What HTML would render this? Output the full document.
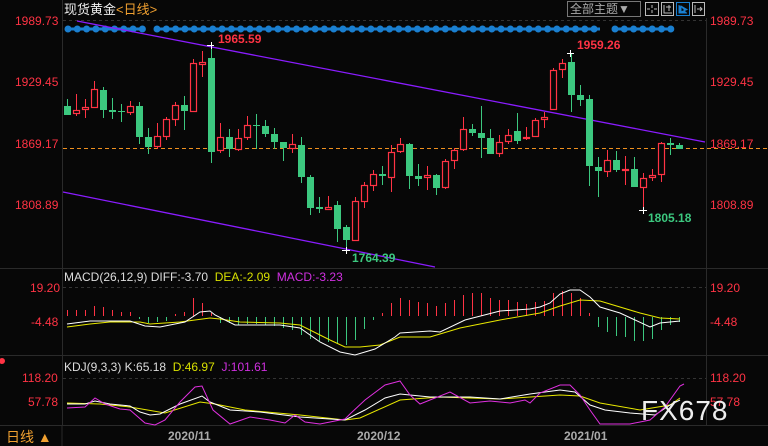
<!DOCTYPE html><html><head><meta charset="utf-8"><style>
body{margin:0;width:768px;height:446px;background:#070707;overflow:hidden;font-family:"Liberation Sans","Noto Sans CJK SC",sans-serif;position:relative}
.t{position:absolute;font-size:12px;white-space:nowrap;line-height:14px}
.r{color:#ff3344}
</style></head><body>
<svg width="768" height="446" style="position:absolute;left:0;top:0">
<g stroke="#2a2a2a" stroke-width="1" fill="none">
<line x1="62.5" y1="0" x2="62.5" y2="425"/>
<line x1="706.5" y1="18" x2="706.5" y2="425"/>
<line x1="0" y1="268.5" x2="768" y2="268.5"/>
<line x1="0" y1="355.5" x2="768" y2="355.5"/>
<line x1="0" y1="425.5" x2="768" y2="425.5"/>
<line x1="62" y1="446" x2="62" y2="426"/>
</g>
<g stroke="#333" stroke-dasharray="3 3"><line x1="63" y1="20.5" x2="706" y2="20.5"/><line x1="63" y1="287.5" x2="706" y2="287.5"/><line x1="63" y1="378.5" x2="706" y2="378.5"/></g>
<line x1="63" y1="148.5" x2="768" y2="148.5" stroke="#f0901e" stroke-dasharray="4 3"/>
<g stroke="#1a7fd0" stroke-width="7" stroke-linecap="round" stroke-dasharray="0 9.3"><line x1="68" y1="29" x2="146" y2="29"/><line x1="157" y1="29" x2="602" y2="29"/><line x1="615" y1="29" x2="676" y2="29"/></g>
<g stroke="#1a7fd0" stroke-width="3"><line x1="68" y1="29" x2="144" y2="29"/><line x1="157" y1="29" x2="600" y2="29"/><line x1="615" y1="29" x2="674" y2="29"/></g>
<g stroke="#8a1cff" stroke-width="1.3"><line x1="77" y1="21" x2="705" y2="142"/><line x1="63" y1="192" x2="435" y2="267"/></g>
<!-- candles -->
<g id="c"></g>
<g stroke="#3cc87f" stroke-width="1">
<path d="M67.5 99V115M103.5 87V118M112.5 98V119M121.5 104V122M139.5 102V144M148.5 128V154M184.5 96V130M211.5 45V163M229.5 129V157M256.5 114V149M265.5 120V137M274.5 128V149M283.5 142V161M301.5 137V183M310.5 175V215M319.5 197V213M337.5 201V242M346.5 225V250M382.5 166V185M409.5 143V189M418.5 164V186M436.5 174V195M472.5 124V136M481.5 106V158M490.5 129V154M517.5 113V144M571.5 53V112M580.5 85V106M589.5 95V186M598.5 157V197M616.5 151V172M634.5 157V187M670.5 138V155M679.5 143V149"/>
</g>
<g fill="#3cc87f">
<rect x="64" y="106" width="7" height="9"/><rect x="100" y="90" width="7" height="20"/><rect x="109" y="110" width="7" height="2"/><rect x="118" y="111" width="7" height="1"/><rect x="136" y="106" width="7" height="31"/><rect x="145" y="137" width="7" height="10"/><rect x="181" y="105" width="7" height="6"/><rect x="208" y="58" width="7" height="94"/><rect x="226" y="137" width="7" height="12"/><rect x="253" y="125" width="7" height="1"/><rect x="262" y="126" width="7" height="8"/><rect x="271" y="134" width="7" height="8"/><rect x="280" y="142" width="7" height="6"/><rect x="298" y="145" width="7" height="32"/><rect x="307" y="177" width="7" height="31"/><rect x="316" y="207" width="7" height="2"/><rect x="334" y="205" width="7" height="24"/><rect x="343" y="227" width="7" height="13"/><rect x="379" y="174" width="7" height="2"/><rect x="406" y="144" width="7" height="32"/><rect x="415" y="176" width="7" height="3"/><rect x="433" y="175" width="7" height="13"/><rect x="469" y="129" width="7" height="4"/><rect x="478" y="133" width="7" height="5"/><rect x="487" y="138" width="7" height="16"/><rect x="514" y="131" width="7" height="10"/><rect x="568" y="62" width="7" height="33"/><rect x="577" y="95" width="7" height="5"/><rect x="586" y="99" width="7" height="67"/><rect x="595" y="167" width="7" height="4"/><rect x="613" y="160" width="7" height="10"/><rect x="631" y="169" width="7" height="18"/><rect x="667" y="143" width="7" height="2"/><rect x="676" y="145" width="7" height="4"/>
</g>
<g stroke="#ff3344" stroke-width="1"><path d="M76.5 94V116M85.5 99V118M94.5 81V107M130.5 101V115M157.5 123V149M166.5 117V140M175.5 102V126M193.5 59V111M202.5 51V77M220.5 123V153M238.5 129V151M247.5 116V140M292.5 134V153M328.5 196V209M355.5 197V240M364.5 182V208M373.5 170V191M391.5 145V192M400.5 138V153M427.5 166V190M445.5 159V189M454.5 148V169M463.5 117V151M499.5 135V157M508.5 129V144M526.5 127V140M535.5 118V137M544.5 112V128M553.5 68V109M562.5 59V78M607.5 150V177M625.5 156V185M643.5 173V210M652.5 169V181M661.5 142V182"/></g>
<g fill="#070707" stroke="#ff3344" stroke-width="1.2">
<rect x="73.5" y="110.5" width="6" height="3"/><rect x="82.5" y="107.5" width="6" height="2"/><rect x="91.5" y="89.5" width="6" height="18"/><rect x="127.5" y="106.5" width="6" height="6"/><rect x="154.5" y="136.5" width="6" height="10"/><rect x="163.5" y="119.5" width="6" height="17"/><rect x="172.5" y="105.5" width="6" height="14"/><rect x="190.5" y="63.5" width="6" height="48"/><rect x="199.5" y="62.5" width="6" height="2"/><rect x="217.5" y="137.5" width="6" height="13"/><rect x="235.5" y="138.5" width="6" height="11"/><rect x="244.5" y="125.5" width="6" height="12"/><rect x="289.5" y="144.5" width="6" height="4"/><rect x="325.5" y="207.5" width="6" height="2"/><rect x="352.5" y="201.5" width="6" height="39"/><rect x="361.5" y="185.5" width="6" height="16"/><rect x="370.5" y="174.5" width="6" height="11"/><rect x="388.5" y="152.5" width="6" height="25"/><rect x="397.5" y="144.5" width="6" height="7"/><rect x="424.5" y="175.5" width="6" height="2"/><rect x="442.5" y="161.5" width="6" height="26"/><rect x="451.5" y="150.5" width="6" height="10"/><rect x="460.5" y="129.5" width="6" height="20"/><rect x="496.5" y="142.5" width="6" height="11"/><rect x="505.5" y="135.5" width="6" height="6"/><rect x="523.5" y="137.5" width="6" height="1"/><rect x="532.5" y="120.5" width="6" height="16"/><rect x="541.5" y="117.5" width="6" height="2"/><rect x="550.5" y="70.5" width="6" height="39"/><rect x="559.5" y="63.5" width="6" height="6"/><rect x="604.5" y="160.5" width="6" height="11"/><rect x="622.5" y="169.5" width="6" height="1"/><rect x="640.5" y="178.5" width="6" height="9"/><rect x="649.5" y="175.5" width="6" height="2"/><rect x="658.5" y="143.5" width="6" height="31"/>
</g>
<g stroke="#fff" stroke-width="1"><path d="M207 45.5H214M211.5 42V49M567 53.5H574M570.5 50V57M342 250.5H350M346.5 247V254M639 210.5H647M643.5 207V214"/></g>
<!-- MACD histogram -->
<path stroke="#ff3344" stroke-width="1" d="M67.5 316V310M76.5 316V310M85.5 316V310M94.5 316V306M103.5 316V307M112.5 316V310M121.5 316V312M130.5 316V312M175.5 316V314M184.5 316V312M193.5 316V298M202.5 316V303M211.5 316V313M382.5 316V313M391.5 316V303M400.5 316V298M409.5 316V300M418.5 316V302M427.5 316V303M436.5 316V306M445.5 316V303M454.5 316V300M463.5 316V295M472.5 316V293M481.5 316V293M490.5 316V298M499.5 316V300M508.5 316V300M517.5 316V302M526.5 316V304M535.5 316V302M544.5 316V301M553.5 316V293M562.5 316V291M571.5 316V293M580.5 316V298M589.5 316V313"/>
<path stroke="#3cc87f" stroke-width="1" d="M139.5 317V319M148.5 317V323M157.5 317V322M166.5 317V321M220.5 317V323M229.5 317V323M238.5 317V325M247.5 317V324M256.5 317V324M265.5 317V325M274.5 317V326M283.5 317V328M292.5 317V330M301.5 317V335M310.5 317V339M319.5 317V341M328.5 317V342M337.5 317V343M346.5 317V345M355.5 317V340M364.5 317V329M373.5 317V320M598.5 317V327M607.5 317V332M616.5 317V336M625.5 317V337M634.5 317V341M643.5 317V341M652.5 317V339M661.5 317V330M670.5 317V325M679.5 317V322"/>
<polyline fill="none" stroke="#e8e800" stroke-width="1" points="67,327 90,324 110,322 140,322 150,324 180,322 210,318 220,319 240,322 280,323 300,325 330,340 345,347 360,347 380,345 400,337 430,337 460,328 500,320 540,313 560,306 580,300 600,301 640,313 660,318 680,319"/>
<polyline fill="none" stroke="#fff" stroke-width="1" points="67,324 90,321 130,321 145,326 160,327 185,322 200,312 210,311 215,315 235,325 280,325 300,328 320,342 340,352 355,355 375,349 395,337 400,333 430,331 440,332 465,320 500,311 530,309 540,307 550,303 560,294 570,290 580,290 590,297 600,307 620,313 635,320 650,327 660,323 680,321"/>
<!-- KDJ -->
<polyline fill="none" stroke="#e8e800" stroke-width="1" points="67,403 100,404 130,407 165,413 200,402 215,404 245,410 300,415 345,420 360,418 400,400 440,397 500,399 560,395 580,396 600,403 640,410 670,405 680,398"/>
<polyline fill="none" stroke="#fff" stroke-width="1" points="67,404 85,404 95,401 110,404 130,406 140,412 150,415 160,414 180,404 202,396 210,402 230,410 260,412 300,417 345,420 365,410 385,398 400,394 430,397 470,397 500,399 530,394 560,390 575,392 590,405 605,410 630,413 655,415 670,405 680,400"/>
<polyline fill="none" stroke="#e030e0" stroke-width="1" points="67,408 85,407 95,398 105,404 120,409 130,410 145,423 155,425 165,420 180,402 195,387 202,386 213,410 230,424 250,417 270,420 285,423 295,415 305,422 320,424 345,419 350,414 365,400 385,385 400,381 410,395 420,404 430,400 450,392 470,403 490,401 510,403 525,400 530,403 540,393 560,385 570,385 580,395 590,410 600,424 630,424 650,420 665,407 680,386 684,384"/>
<!-- buttons -->
<rect x="567.5" y="1.5" width="73" height="15" fill="none" stroke="#777"/>
<g fill="none" stroke="#bbb"><rect x="645.5" y="2.5" width="13" height="13"/><rect x="661.5" y="2.5" width="12" height="13"/><rect x="692.5" y="2.5" width="12" height="13"/>
<path d="M652 5V8M652 10V13M647 9H650M654 9H657M664 5V13H672M669 5V11M666 7H671M695 5V13M697 9H702M700 7L702 9L700 11"/></g>
<rect x="676.5" y="2.5" width="13" height="13" fill="none" stroke="#1a7fd0"/>
<path d="M679 5V13H687M681 6L687 9.5L681 12Z" fill="#1a7fd0" stroke="#1a7fd0"/>
<circle cx="2" cy="361" r="3" fill="#ff3344"/>
</svg>
<div class="t" style="left:64px;top:3px;font-size:13px"><span style="color:#eee">现货黄金</span><span style="color:#f0a030">&lt;日线&gt;</span></div>
<div class="t" style="left:570px;top:2px;color:#aaa;font-size:12px">全部主题▼</div>
<div class="t r" style="left:15px;top:14px">1989.73</div>
<div class="t r" style="left:15px;top:75px">1929.45</div>
<div class="t r" style="left:15px;top:137px">1869.17</div>
<div class="t r" style="left:15px;top:198px">1808.89</div>
<div class="t r" style="left:710px;top:14px">1989.73</div>
<div class="t r" style="left:710px;top:75px">1929.45</div>
<div class="t r" style="left:710px;top:137px">1869.17</div>
<div class="t r" style="left:710px;top:198px">1808.89</div>
<div class="t r" style="left:218px;top:32px;font-weight:bold">1965.59</div>
<div class="t r" style="left:577px;top:38px;font-weight:bold">1959.26</div>
<div class="t" style="left:352px;top:251px;color:#3cc87f;font-weight:bold">1764.39</div>
<div class="t" style="left:648px;top:211px;color:#3cc87f;font-weight:bold">1805.18</div>
<div class="t" style="left:64px;top:270px;color:#ddd">MACD(26,12,9) DIFF:-3.70 &nbsp;<span style="color:#d8e000">DEA:-2.09</span> &nbsp;<span style="color:#d030e0">MACD:-3.23</span></div>
<div class="t r" style="left:30px;top:281px">19.20</div>
<div class="t r" style="left:31px;top:315px">-4.48</div>
<div class="t r" style="left:710px;top:281px">19.20</div>
<div class="t r" style="left:710px;top:315px">-4.48</div>
<div class="t" style="left:64px;top:360px;color:#ddd">KDJ(9,3,3) K:65.18 &nbsp;<span style="color:#d8e000">D:46.97</span> &nbsp;<span style="color:#d030e0">J:101.61</span></div>
<div class="t r" style="left:22px;top:371px">118.20</div>
<div class="t r" style="left:28px;top:395px">57.78</div>
<div class="t r" style="left:710px;top:371px">118.20</div>
<div class="t r" style="left:710px;top:395px">57.78</div>
<div class="t" style="left:641px;top:396px;color:#eee;font-size:28px;line-height:30px;letter-spacing:1px">FX678</div>
<div class="t" style="left:6px;top:429px;color:#f0a030;font-size:14px;line-height:16px">日线 ▲</div>
<div class="t" style="left:168px;top:429px;color:#aaa;font-weight:bold">2020/11</div>
<div class="t" style="left:357px;top:429px;color:#aaa;font-weight:bold">2020/12</div>
<div class="t" style="left:564px;top:429px;color:#aaa;font-weight:bold">2021/01</div>
</body></html>
